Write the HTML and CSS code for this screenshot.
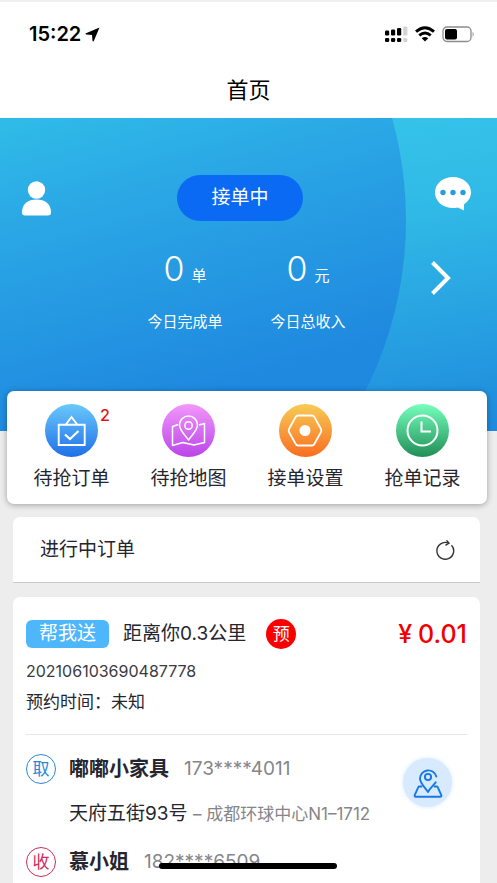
FILE: index.html
```html
<!DOCTYPE html>
<html lang="zh-CN">
<head>
<meta charset="utf-8">
<meta name="viewport" content="width=device-width, initial-scale=1">
<title>首页</title>
<link rel="stylesheet" href="styles.css">
</head>
<body>
<header class="top">
  <div class="status">
    <span class="clock">15:22
      <svg width="15" height="15" viewBox="0 0 15 15" aria-hidden="true"><path d="M14.500 .5 8.800 14Q8 15 7.500 13.800L7 8 1.200 7.500Q-.2 7 1 6.200Z"/></svg>
    </span>
    <span class="indicators">
      <svg width="23" height="17" viewBox="0 0 23 17" aria-hidden="true">
        <rect x="0" y="4.500" width="4.200" height="5" rx="1.200"/><rect x="6" y="3.500" width="4.200" height="6" rx="1.200"/><rect x="12" y="2" width="4.200" height="7.500" rx="1.200"/><rect x="18.200" y="0.500" width="4.200" height="9" rx="1.200" fill="#d2d2d2"/>
        <rect x="0" y="12" width="4.200" height="4" rx="1.200"/><rect x="6" y="12" width="4.200" height="4" rx="1.200"/><rect x="12" y="12" width="4.200" height="4" rx="1.200"/><rect x="18.200" y="12" width="4.200" height="4" rx="1.200" fill="#d2d2d2"/>
      </svg>
      <svg width="20" height="16" viewBox="0 0 20 16" aria-hidden="true"><g fill="none" stroke="#000" stroke-width="2.900"><path d="M1 5.700Q10-2.200 19 5.700"/><path d="M4.300 9.300Q10 4.500 15.700 9.300"/></g><path d="M6.700 12.200Q10 9.800 13.300 12.200L10 15.500Z"/></svg>
      <svg width="33" height="17" viewBox="0 0 33 17" aria-hidden="true"><rect x="1" y="1" width="28" height="14.500" rx="4" fill="none" stroke="#8c8c8c" stroke-width="1.300"/><rect x="3" y="3" width="12" height="10.500" rx="2"/><path d="M30.600 5.800Q32.800 8.200 30.600 10.700Z" fill="#8c8c8c"/></svg>
    </span>
  </div>
  <h1 class="title">首页</h1>
</header>

<main>
  <section class="hero">
    <svg class="hero-bg" viewBox="0 0 497 313" preserveAspectRatio="none" aria-hidden="true">
      <defs>
        <linearGradient id="outer" gradientUnits="userSpaceOnUse" x1="400" y1="0" x2="450" y2="313"><stop offset="0" stop-color="#35c3e9"/><stop offset=".3" stop-color="#30b9e6"/><stop offset="1" stop-color="#1f8bdd"/></linearGradient>
        <linearGradient id="inner" gradientUnits="userSpaceOnUse" x1="20" y1="0" x2="105" y2="305"><stop offset="0" stop-color="#2fbbe7"/><stop offset=".35" stop-color="#2aa6e5"/><stop offset="1" stop-color="#1f88df"/></linearGradient>
      </defs>
      <rect width="497" height="313" fill="url(#outer)"/>
      <circle cx="26" cy="102" r="380" fill="url(#inner)"/>
    </svg>
    <div class="hero-actions">
      <button class="icon-btn profile" aria-label="个人中心">
        <svg width="29" height="35" viewBox="0 0 29 35"><circle cx="14.500" cy="9" r="8.700"/><path d="M0 31.500C0 22.500 6 18.500 14.500 18.500S29 22.500 29 31.500Q29 34.500 26 34.500H3Q0 34.500 0 31.500Z"/></svg>
      </button>
      <button class="work-state">接单中</button>
      <button class="icon-btn chat" aria-label="消息">
        <svg width="36" height="34" viewBox="0 0 36 34"><path d="M18 0C28 0 36 6.500 36 15.500C36 20.500 33 24.700 29 27.300V33.500L22.700 30.400Q20.500 31 18 31C8 31 0 24.500 0 15.500S8 0 18 0Z"/><g fill="#249fd8"><circle cx="8" cy="15.500" r="2.700"/><circle cx="18" cy="15.500" r="2.700"/><circle cx="28" cy="15.500" r="2.700"/></g></svg>
      </button>
    </div>
    <div class="stats">
      <div class="stat"><p class="stat-value"><span class="num">0</span>单</p><p>今日完成单</p></div>
      <div class="stat"><p class="stat-value"><span class="num">0</span>元</p><p>今日总收入</p></div>
      <button class="icon-btn more" aria-label="查看详情">
        <svg width="20" height="34" viewBox="0 0 20 34"><path d="M1.500 1.500 17 17 1.500 32.500" fill="none" stroke="#fff" stroke-width="4"/></svg>
      </button>
    </div>
  </section>

  <nav class="menu">
    <a href="#pending">
      <span class="disc">
        <svg width="53" height="53" viewBox="0 0 53 53" aria-hidden="true"><defs><linearGradient id="blue" x2="0" y2="1"><stop stop-color="#6bc8fb"/><stop offset="1" stop-color="#1e70e8"/></linearGradient></defs><circle cx="26.500" cy="26.500" r="26.500" fill="url(#blue)"/><g fill="none" stroke="#fff" stroke-width="1.900"><path d="M13.700 20.700H39.700V41H13.700ZM20.800 20.500 26.500 13 32.200 20.500"/><path d="M20 30.500 25 35 33.500 27" stroke-width="2.200"/></g></svg>
        <span class="badge">2</span>
      </span>
      待抢订单
    </a>
    <a href="#map">
      <span class="disc">
        <svg width="53" height="53" viewBox="0 0 53 53" aria-hidden="true"><defs><linearGradient id="violet" x2="0" y2="1"><stop stop-color="#f297fa"/><stop offset="1" stop-color="#bb45e9"/></linearGradient></defs><circle cx="26.500" cy="26.500" r="26.500" fill="url(#violet)"/><g fill="none" stroke="#fff" stroke-width="1.500" stroke-linejoin="round"><path d="M16.200 20.500 10.500 22.500V41.500L20.700 38.500 32 41 42.500 38.500V19.500L37 21"/><path d="M26.500 36C22 30 17.500 26 17.500 21A9 9 0 0 1 35.500 21C35.500 26 31 30 26.500 36Z"/><circle cx="26.500" cy="21.500" r="3.700"/></g></svg>
      </span>
      待抢地图
    </a>
    <a href="#settings">
      <span class="disc">
        <svg width="53" height="53" viewBox="0 0 53 53" aria-hidden="true"><defs><linearGradient id="orange" x2="0" y2="1"><stop stop-color="#f8cb55"/><stop offset="1" stop-color="#f96d21"/></linearGradient></defs><circle cx="26.500" cy="26.500" r="26.500" fill="url(#orange)"/><path d="M19 11.500H33Q34.500 11.500 35.300 12.900L42 25Q42.700 26.500 42 28L35.300 40Q34.500 41.500 33 41.500H19Q17.500 41.500 16.700 40L10 28Q9.300 26.500 10 25L16.700 12.900Q17.500 11.500 19 11.500Z" fill="none" stroke="#fff" stroke-width="1.800"/><circle cx="26" cy="26.500" r="5.500" fill="#fff"/></svg>
      </span>
      接单设置
    </a>
    <a href="#history">
      <span class="disc">
        <svg width="53" height="53" viewBox="0 0 53 53" aria-hidden="true"><defs><linearGradient id="green" x2="0" y2="1"><stop stop-color="#75ffbd"/><stop offset="1" stop-color="#218e56"/></linearGradient></defs><circle cx="26.500" cy="26.500" r="26.500" fill="url(#green)"/><g fill="none" stroke="#fff" stroke-width="2"><circle cx="26.500" cy="26.500" r="15"/><path d="M25.500 17.500V27.500H35"/></g></svg>
      </span>
      抢单记录
    </a>
  </nav>

  <section class="panel section-head">
    <h2>进行中订单</h2>
    <button class="icon-btn" aria-label="刷新">
      <svg width="20" height="20" viewBox="0 0 20 20" fill="none" stroke="#333" stroke-width="1.400"><path d="M16.500 5.200A8.400 8.400 0 1 1 13 2.900"/><path d="M11.500 .4 14 3.200 10.500 5.300"/></svg>
    </button>
  </section>

  <article class="panel order">
    <div class="order-head">
      <span class="tag">帮我送</span>
      <span class="distance">距离你0.3公里</span>
      <span class="booked">预</span>
      <strong class="price"><span class="yen">¥</span>0.01</strong>
    </div>
    <p class="order-no">202106103690487778</p>
    <p class="order-time">预约时间：未知</p>
    <div class="route">
      <div class="stops">
        <div class="stop">
          <span class="mark pickup">取</span>
          <p class="contact"><b>嘟嘟小家具</b><span class="phone">173****4011</span></p>
          <p class="address">天府五街93号 <span class="detail">– 成都环球中心N1–1712</span></p>
        </div>
        <div class="stop">
          <span class="mark dropoff">收</span>
          <p class="contact"><b>慕小姐</b><span class="phone">182****6509</span></p>
        </div>
      </div>
      <button class="icon-btn locate" aria-label="地图导航">
        <svg width="30" height="30" viewBox="0 0 30 30" fill="none" stroke="#1677e5" stroke-width="1.900" stroke-linecap="round" stroke-linejoin="round"><path d="M23.300 8.500A8.300 8.300 0 0 0 7 10.500C7 15 11.500 19 15 24C17.500 19.500 21 17 22.700 14.300"/><circle cx="15" cy="9" r="3.100"/><path d="M8.500 18.500H6.300Q5.500 18.500 5.200 19.300L1.700 27.200Q1.300 28.800 2.800 28.800H27.200Q28.700 28.800 28.300 27.200L24.800 19.300Q24.500 18.500 23.700 18.500H21.500"/></svg>
      </button>
    </div>
  </article>
</main>
<div class="home-bar"></div>
</body>
</html>
```
FILE: styles.css
```css
* { box-sizing: border-box; }

body {
  margin: 0;
  background: #ededed;
  color: #25252f;
  font-family: Inter, "Noto Sans CJK SC", sans-serif;
  font-size: 19px;
  line-height: 28px;
  overflow: hidden;
}

h1, h2, p { margin: 0; font-weight: 400; font-size: inherit; }
svg { display: block; flex: none; }
button { font: inherit; border: 0; padding: 0; }
.icon-btn { background: none; }

.top {
  height: 118px;
  background: #fff;
  border-top: 2px solid #f0f0f0;
  color: #000;
}
.status {
  display: flex;
  justify-content: space-between;
  padding: 18px 22px 0 29px;
}
.clock { display: flex; align-items: center; gap: 4px; font-size: 20px; font-weight: 600; }
.indicators { display: flex; align-items: center; gap: 7px; }
.title { margin-top: 26px; text-align: center; font-size: 22px; line-height: 32px; }

.hero {
  position: relative;
  height: 313px;
  padding-top: 57px;
  color: #fff;
}
.hero-bg { position: absolute; inset: 0; width: 100%; height: 100%; }
.hero-actions {
  position: relative;
  display: grid;
  grid-template-columns: 1fr auto 1fr;
  align-items: center;
  padding: 0 26px 0 9px;
}
.hero-actions svg { fill: #fff; }
.hero-actions .profile { justify-self: start; margin-left: 13px; }
.hero-actions .chat { justify-self: end; margin-bottom: 8px; }
.work-state {
  width: 126px;
  height: 46px;
  border-radius: 23px;
  background: #0b6af3;
  color: #fff;
}
.stats {
  position: relative;
  display: grid;
  grid-template-columns: 1fr 123px 123px 1fr;
  margin-top: 28px;
  padding-right: 4px;
  font-size: 15px;
}
.stat { text-align: center; }
.stat:first-child { grid-column: 2; }
.stat-value { line-height: 40px; margin-bottom: 12px; }
.num { font-size: 34px; font-weight: 300; margin-right: 7px; }
.more { align-self: start; justify-self: end; margin: 12px 42px 0 0; }

.menu {
  position: relative;
  display: grid;
  grid-template-columns: repeat(4, 1fr);
  margin: -40px 10px 13px 7px;
  padding: 13px 6px 11px;
  background: #fff;
  border-radius: 7px;
  box-shadow: 0 1px 6px #0005;
}
.menu a {
  display: flex;
  flex-direction: column;
  align-items: center;
  gap: 8px;
  color: inherit;
  text-decoration: none;
}
.disc { position: relative; }
.badge {
  position: absolute;
  left: 55px;
  top: 0;
  color: #e01313;
  font-size: 16px;
  font-weight: 500;
  line-height: 22px;
}

.panel { margin: 0 17px 0 13px; background: #fff; border-radius: 7px; }
.section-head {
  display: flex;
  justify-content: space-between;
  align-items: center;
  height: 66px;
  padding: 0 25px 0 27px;
  margin-bottom: 14px;
  border-bottom: 1px solid #c9c9c9;
  border-radius: 7px 7px 0 0;
}

.order { padding: 22px 13px; }
.order-head { display: flex; align-items: center; height: 30px; }
.tag {
  padding: 0 13px;
  border-radius: 6px;
  background: #4eb6fb;
  color: #fff;
}
.distance { margin: 0 20px 0 14px; }
.booked, .mark {
  display: grid;
  place-items: center;
  width: 30px;
  height: 30px;
  border-radius: 50%;
  font-size: 17px;
}
.booked { background: #fb0000; color: #fff; }
.price { margin-left: auto; color: #f20000; font-size: 25px; font-weight: 500; }
.yen { margin-right: 6px; }
.order-no { margin-top: 8px; font-size: 16px; color: #3a3a3f; }
.order-time { margin-top: 3px; font-size: 17px; }

.route {
  display: flex;
  justify-content: space-between;
  align-items: flex-start;
  margin-top: 18px;
  padding-top: 19px;
  border-top: 1px solid #e6e6e6;
}
.stop {
  display: grid;
  grid-template-columns: 30px 1fr;
  column-gap: 13px;
  row-gap: 16px;
  margin-bottom: 19px;
}
.stop .address { grid-column: 2; white-space: nowrap; }
.mark { border: 1px solid; }
.pickup { color: #2888d8; }
.dropoff { color: #d12a5c; }
.contact { display: flex; gap: 15px; line-height: 30px; }
.contact b { font-size: 20px; font-weight: 700; }
.phone, .detail { color: #85858a; }
.detail { font-size: 17px; }
.locate {
  display: grid;
  place-items: center;
  width: 49px;
  height: 49px;
  margin: 4px 15px 0 0;
  border-radius: 50%;
  background: #d8ebfe;
  box-shadow: 0 0 4px #d8ebfe;
}

.home-bar {
  position: fixed;
  left: 50%;
  bottom: 14px;
  width: 178px;
  height: 6px;
  margin-left: -90px;
  border-radius: 3px;
  background: #000;
}
```
